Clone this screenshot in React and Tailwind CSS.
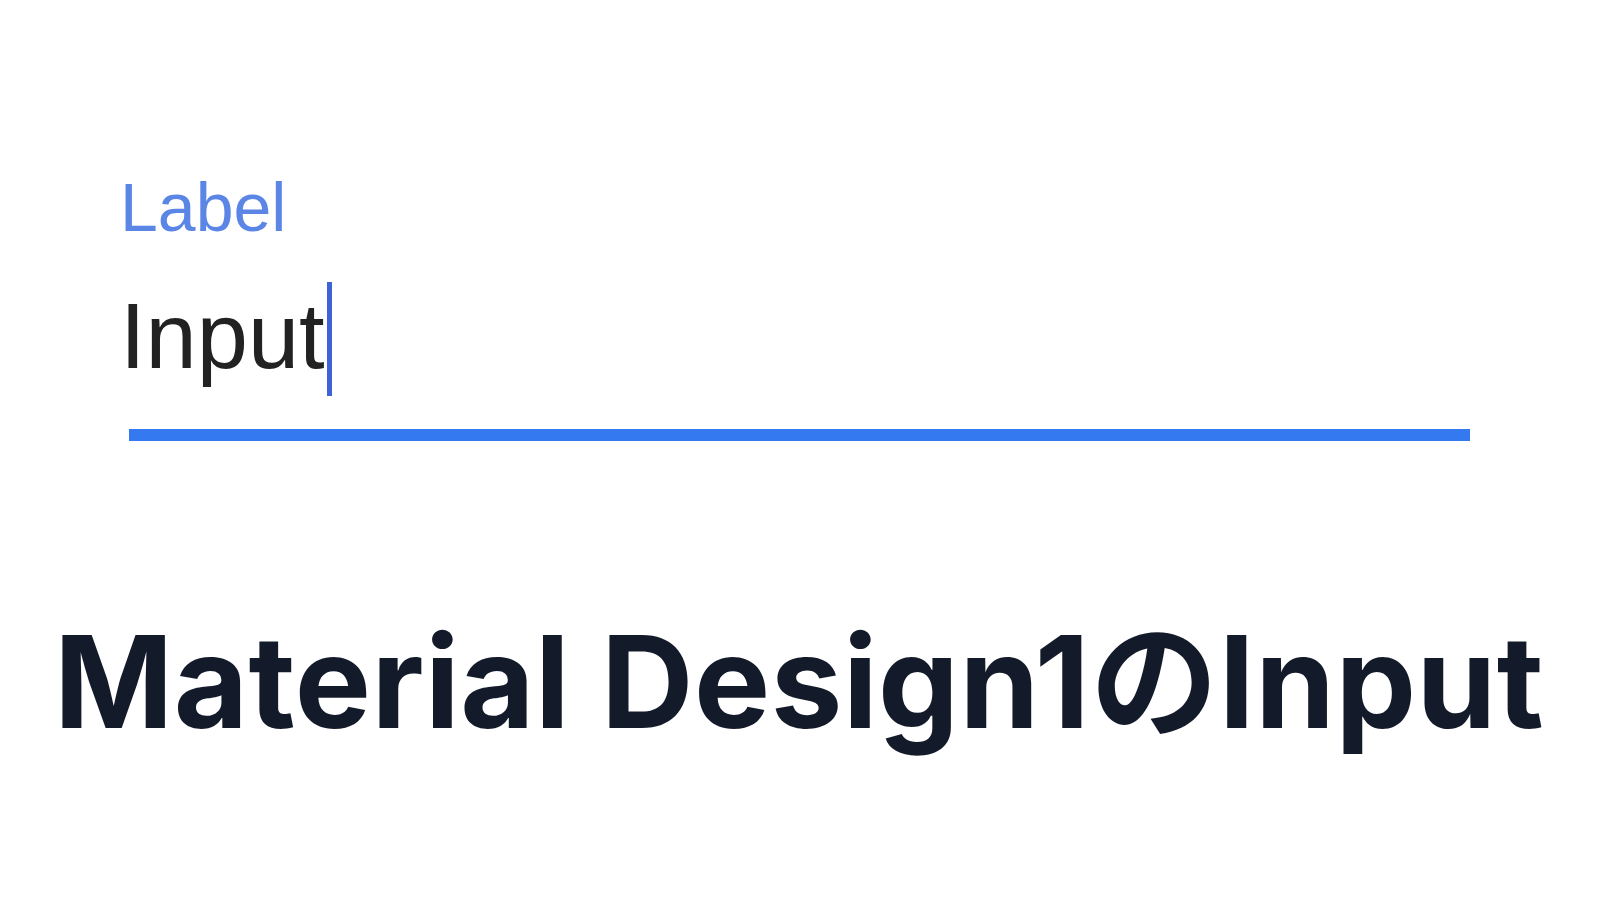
export default function App() {
  return (
    <div className="w-full h-[900px] bg-white overflow-hidden">
      <div className="pl-[120px] pt-[173px] font-['Liberation_Sans',Arial,sans-serif]">
        <div className="text-[68px] leading-none text-[#5b86e6]">Label</div>
        <div className="mt-[49px] flex items-start">
          <span className="text-[92px] leading-none text-[#222222]">Input</span>
          <span className="-mt-[8px] ml-[2px] w-[5px] h-[114px] bg-[#3d63d6]" />
        </div>
      </div>
      <div className="mt-[33px] ml-[129px] w-[1341px] h-[12px] bg-[#3579f0]" />
      <h1 className="mt-[177px] pl-[54px] text-9xl font-bold tracking-[0.5px] text-[#131a29] font-['Inter','Noto_Sans_CJK_JP',sans-serif] whitespace-nowrap">
        Material Design1のInput
      </h1>
    </div>
  );
}
